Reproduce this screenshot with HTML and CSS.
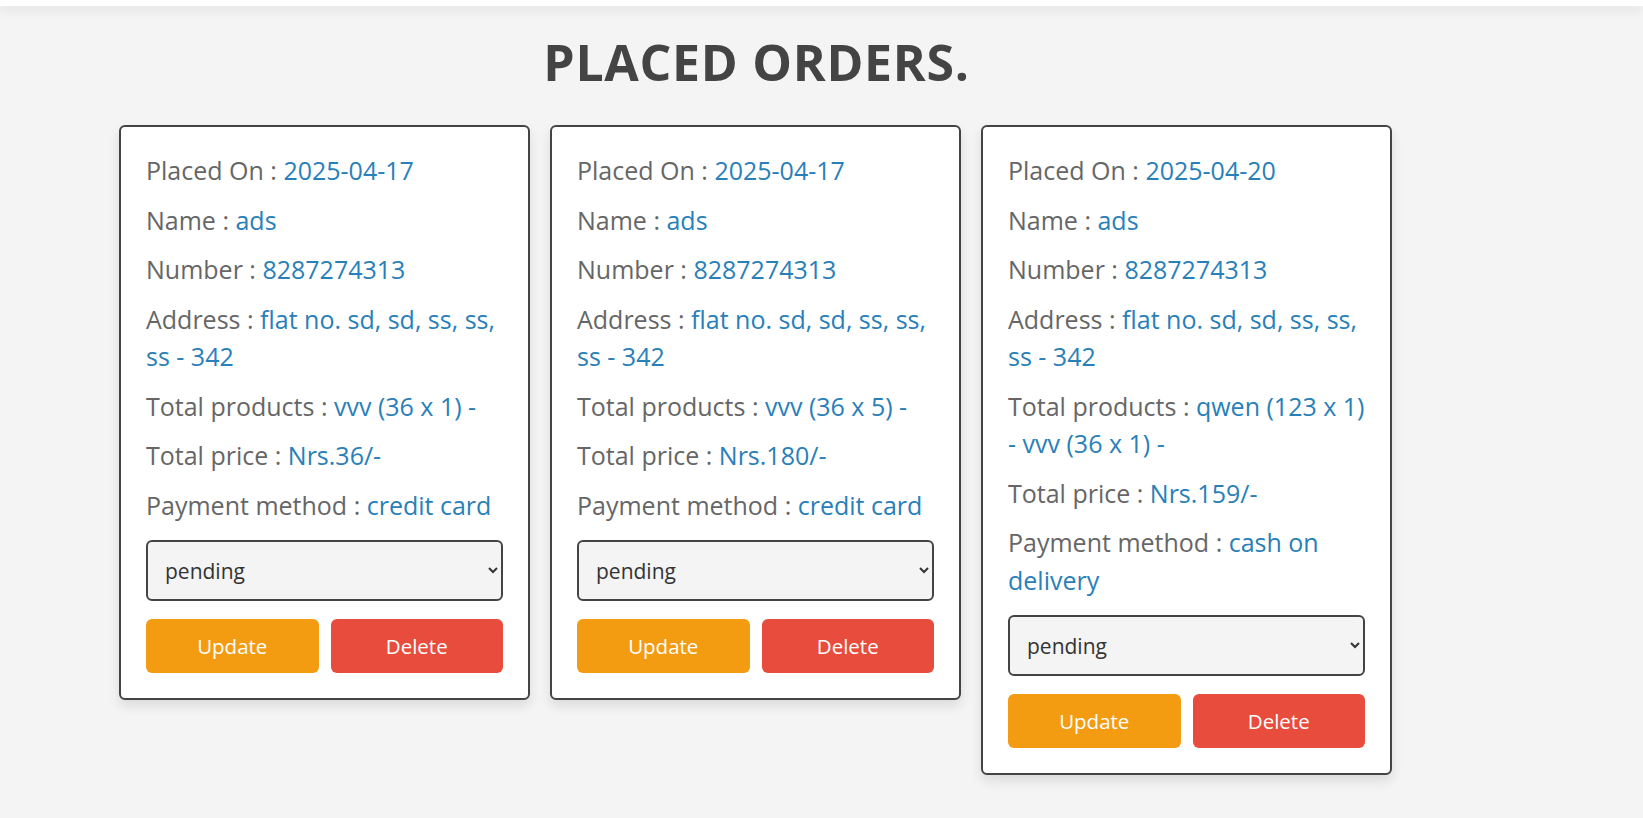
FILE: index.html
```html
<!DOCTYPE html>
<html lang="en">
<head>
<meta charset="utf-8">
<title>Placed Orders</title>
<link rel="stylesheet" href="styles.css">
</head>
<body>
<header class="topbar"></header>
<main class="orders">
  <h1 class="title">placed orders.</h1>
  <div class="grid">
    <form class="card">
      <p>Placed On : <span>2025-04-17</span></p>
      <p>Name : <span>ads</span></p>
      <p>Number : <span>8287274313</span></p>
      <p>Address : <span>flat no. sd, sd, ss, ss, ss - 342</span></p>
      <p>Total products : <span>vvv (36 x 1) - </span></p>
      <p>Total price : <span>Nrs.36/-</span></p>
      <p>Payment method : <span>credit card</span></p>
      <select class="status">
        <option>pending</option>
        <option>completed</option>
      </select>
      <div class="actions">
        <button type="button" class="btn btn-update">Update</button>
        <button type="button" class="btn btn-delete">Delete</button>
      </div>
    </form>
    <form class="card">
      <p>Placed On : <span>2025-04-17</span></p>
      <p>Name : <span>ads</span></p>
      <p>Number : <span>8287274313</span></p>
      <p>Address : <span>flat no. sd, sd, ss, ss, ss - 342</span></p>
      <p>Total products : <span>vvv (36 x 5) - </span></p>
      <p>Total price : <span>Nrs.180/-</span></p>
      <p>Payment method : <span>credit card</span></p>
      <select class="status">
        <option>pending</option>
        <option>completed</option>
      </select>
      <div class="actions">
        <button type="button" class="btn btn-update">Update</button>
        <button type="button" class="btn btn-delete">Delete</button>
      </div>
    </form>
    <form class="card">
      <p>Placed On : <span>2025-04-20</span></p>
      <p>Name : <span>ads</span></p>
      <p>Number : <span>8287274313</span></p>
      <p>Address : <span>flat no. sd, sd, ss, ss, ss - 342</span></p>
      <p>Total products : <span>qwen (123 x 1) - vvv (36 x 1) - </span></p>
      <p>Total price : <span>Nrs.159/-</span></p>
      <p>Payment method : <span>cash on delivery</span></p>
      <select class="status">
        <option>pending</option>
        <option>completed</option>
      </select>
      <div class="actions">
        <button type="button" class="btn btn-update">Update</button>
        <button type="button" class="btn btn-delete">Delete</button>
      </div>
    </form>
  </div>
</main>
</body>
</html>
```
FILE: styles.css
```css
* {
  box-sizing: border-box;
}

body {
  margin: 0;
  background: #f4f4f4;
  font-family: "Open Sans", "Noto Sans", sans-serif;
  min-height: 818px;
}

.topbar {
  height: 6px;
  background: #fff;
  box-shadow: 0 5px 10px rgba(0, 0, 0, 0.08);
}

.orders {
  width: 1275px;
  margin-left: 119px;
  padding-top: 26px;
}

.title {
  margin: 0 0 33px;
  font-size: 50px;
  line-height: 60px;
  font-weight: 700;
  letter-spacing: 0.7px;
  color: #444;
  text-align: center;
  text-transform: uppercase;
}

.grid {
  display: flex;
  gap: 20px;
  align-items: flex-start;
}

.card {
  width: 411px;
  background: #fff;
  border: 2px solid #444;
  border-radius: 6px;
  padding: 25px;
  box-shadow: 0 6px 12px rgba(0, 0, 0, 0.1);
  display: flex;
  flex-direction: column;
}

.card p {
  margin: 0 0 12px;
  font-size: 25px;
  line-height: 37.5px;
  color: #666;
}

.card p span {
  color: #2980b9;
}

.status {
  margin-top: 4px;
  width: 100%;
  height: 61px;
  border: 2px solid #444;
  border-radius: 6px;
  background-color: #f4f4f4;
  font-family: inherit;
  font-size: 21px;
  color: #333;
  padding: 0 13px;
}

.actions {
  margin-top: 18px;
  display: flex;
  gap: 12px;
}

.btn {
  flex: 1;
  height: 54px;
  border: none;
  border-radius: 6px;
  font-family: inherit;
  font-size: 20.5px;
  color: #fff;
  cursor: pointer;
}

.btn-update {
  background: #f39c12;
}

.btn-delete {
  background: #e74c3c;
}
```
